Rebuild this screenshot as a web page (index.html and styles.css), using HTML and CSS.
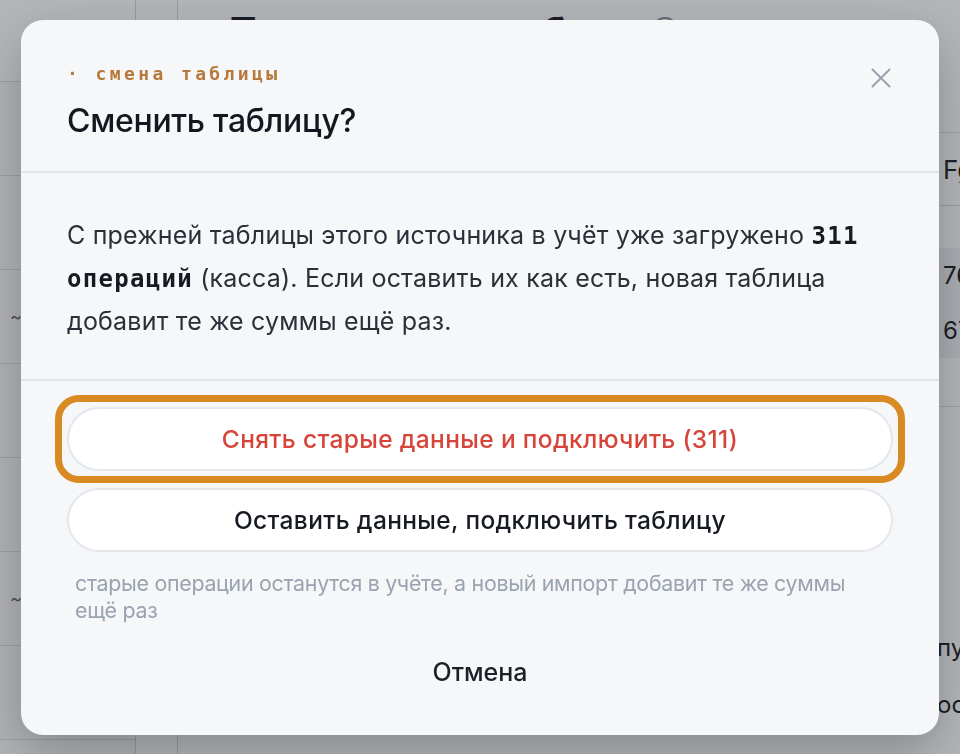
FILE: index.html
```html
<!DOCTYPE html>
<html lang="ru">

<head>
    <meta charset="UTF-8">
    <meta name="viewport" content="width=device-width, initial-scale=1.0">
    <title>Источники — таблицы</title>
    <link rel="stylesheet" href="styles.css">
</head>

<body>
    <div class="app">
        <aside class="sidebar">
            <div class="sidebar-head"></div>
            <div class="sidebar-row"></div>
            <div class="sidebar-row"></div>
            <div class="sidebar-row"><span class="tilde">~</span></div>
            <div class="sidebar-row"></div>
            <div class="sidebar-row"></div>
            <div class="sidebar-row"><span class="tilde">~</span></div>
            <div class="sidebar-row"></div>
        </aside>
        <div class="rail"></div>
        <main class="main">
            <header class="page-head">
                <h1>Подключение таблиц</h1>
                <span class="info-dot"></span>
            </header>
            <div class="sheet">
                <div class="sheet-head">
                    <span></span>
                    <span class="cell">Fg_kassa_2024.xlsx</span>
                </div>
                <div class="sheet-row shaded">
                    <span></span>
                    <span class="cell">76 540,00</span>
                </div>
                <div class="sheet-row shaded">
                    <span></span>
                    <span class="cell">67 120,00</span>
                </div>
                <div class="sheet-foot">
                    <span></span>
                    <div class="foot-lines">
                        <span>пуск импорта</span>
                        <span>остаток</span>
                    </div>
                </div>
            </div>
        </main>
    </div>

    <div class="backdrop">
        <div class="dialog" role="dialog" aria-labelledby="dialogTitle">
            <div class="dialog-head">
                <div>
                    <p class="eyebrow">· смена таблицы</p>
                    <h2 class="dialog-title" id="dialogTitle">Сменить таблицу?</h2>
                </div>
                <button class="dialog-close" aria-label="Закрыть">
                    <svg width="24" height="24" viewBox="0 0 24 24" fill="none" stroke="currentColor" stroke-width="2" stroke-linecap="round">
                        <path d="M3.5 3.5 20.5 20.5M20.5 3.5 3.5 20.5" />
                    </svg>
                </button>
            </div>

            <div class="dialog-body">
                <p>С прежней таблицы этого источника в учёт уже загружено <b class="num">311 операций</b> (касса). Если оставить их как есть, новая таблица добавит те же суммы ещё раз.</p>
            </div>

            <div class="dialog-actions">
                <button class="choice choice-danger is-focused">Снять старые данные и подключить (311)</button>
                <button class="choice">Оставить данные, подключить таблицу</button>
                <p class="choice-hint">старые операции останутся в учёте, а новый импорт добавит те же суммы ещё раз</p>
                <button class="cancel">Отмена</button>
            </div>
        </div>
    </div>
</body>

</html>
```

FILE: styles.css
```css
body {
    margin: 0;
    font-family: 'Inter', 'Noto Sans', sans-serif;
    color: #1b1f27;
    background: #fff;
    overflow: hidden;
}

/* page under the dialog */

.app {
    display: flex;
    height: 100vh;
}

.sidebar {
    width: 135px;
    flex-shrink: 0;
    border-right: 1px solid #d4d7db;
    background: #fbfbfc;
}

.sidebar-head {
    height: 81px;
    background: #fff;
    border-bottom: 1px solid #dadde1;
}

.sidebar-row {
    height: 93px;
    border-bottom: 1px solid #dadde1;
    display: flex;
    align-items: center;
    padding-left: 10px;
}

.tilde {
    color: #5d636d;
    font-size: 18px;
}

.rail {
    width: 41px;
    flex-shrink: 0;
    border-right: 1px solid #d4d7db;
}

.main {
    flex: 1;
    min-width: 0;
}

.page-head {
    height: 132px;
    display: flex;
    align-items: flex-start;
    gap: 16px;
    padding-left: 51px;
    border-bottom: 1px solid #dadde1;
}

.page-head h1 {
    margin: 8px 0 0;
    font-size: 38px;
    font-weight: 700;
    letter-spacing: -0.5px;
    white-space: nowrap;
}

.info-dot {
    margin-top: 17px;
    width: 22px;
    height: 22px;
    border: 2px solid #8a9099;
    border-radius: 50%;
}

.sheet {
    padding-left: 51px;
}

.sheet-head,
.sheet-row,
.sheet-foot {
    display: grid;
    grid-template-columns: 714px 260px;
}

.sheet-head {
    height: 72px;
    align-items: center;
    border-bottom: 1px solid #dadde1;
    font-size: 26px;
}

.sheet-row {
    height: 55px;
    align-items: center;
    font-size: 24px;
}

.sheet-row.shaded {
    background: #f1f2f4;
}

.sheet-head + .sheet-row {
    margin-top: 42px;
}

.sheet-foot {
    border-top: 1px solid #dadde1;
    margin-top: 48px;
    padding-top: 226px;
}

.foot-lines {
    display: flex;
    flex-direction: column;
    gap: 28px;
    font-size: 24px;
    margin-left: -6px;
}

/* dialog */

.backdrop {
    position: fixed;
    inset: 0;
    background: rgba(24, 28, 36, 0.32);
    display: flex;
    justify-content: center;
    align-items: center;
}

.dialog {
    width: 918px;
    height: 715px;
    box-sizing: border-box;
    background: #f5f7f9;
    border-radius: 22px;
    box-shadow: 0 18px 50px rgba(15, 20, 30, 0.28);
    display: flex;
    flex-direction: column;
}

.dialog-head {
    display: flex;
    justify-content: space-between;
    align-items: flex-start;
    padding: 44px 46px 31px;
    border-bottom: 2px solid #e1e5ea;
}

.eyebrow {
    margin: 0;
    font-family: 'DejaVu Sans Mono', 'Liberation Mono', monospace;
    font-size: 18px;
    line-height: 20px;
    font-weight: 700;
    letter-spacing: 3.4px;
    color: #b8783a;
}

.dialog-title {
    margin: 18px 0 0;
    font-size: 32px;
    line-height: 38px;
    font-weight: 500;
    letter-spacing: -0.3px;
    color: #131720;
}

.dialog-close {
    margin-top: 2px;
    width: 24px;
    height: 24px;
    padding: 0;
    border: none;
    background: none;
    color: #9aa2ae;
    cursor: pointer;
}

.dialog-close svg {
    display: block;
}

.dialog-body {
    padding: 41px 46px 37px;
    border-bottom: 2px solid #e1e5ea;
}

.dialog-body p {
    margin: 0;
    font-size: 25px;
    line-height: 42px;
    letter-spacing: 0.2px;
    color: #2a2f38;
}

.num {
    font-family: 'DejaVu Sans Mono', 'Liberation Mono', monospace;
    font-size: 24px;
    font-weight: 700;
    letter-spacing: 1.3px;
    color: #161a22;
}

.dialog-actions {
    padding: 26px 46px 0;
    display: flex;
    flex-direction: column;
}

.choice {
    height: 64px;
    border-radius: 32px;
    border: 2px solid #e4e7eb;
    background: #fff;
    font-family: inherit;
    font-size: 24.5px;
    font-weight: 500;
    letter-spacing: 0.35px;
    color: #161a22;
    cursor: pointer;
}

.choice + .choice {
    margin-top: 17px;
}

.choice-danger {
    color: #d7443a;
}

.choice.is-focused {
    position: relative;
}

.choice.is-focused::before {
    content: "";
    position: absolute;
    inset: -14px;
    border: 7px solid #d98a22;
    border-radius: 24px;
}

.choice-hint {
    margin: 18px 0 0;
    padding: 0 30px 0 8px;
    font-size: 21.4px;
    line-height: 27px;
    letter-spacing: -0.3px;
    color: #9aa3af;
}

.cancel {
    align-self: center;
    margin-top: 24px;
    height: 48px;
    padding: 0 20px;
    border: none;
    background: none;
    font-family: inherit;
    font-size: 25px;
    font-weight: 500;
    color: #1b1f27;
    cursor: pointer;
}
```
